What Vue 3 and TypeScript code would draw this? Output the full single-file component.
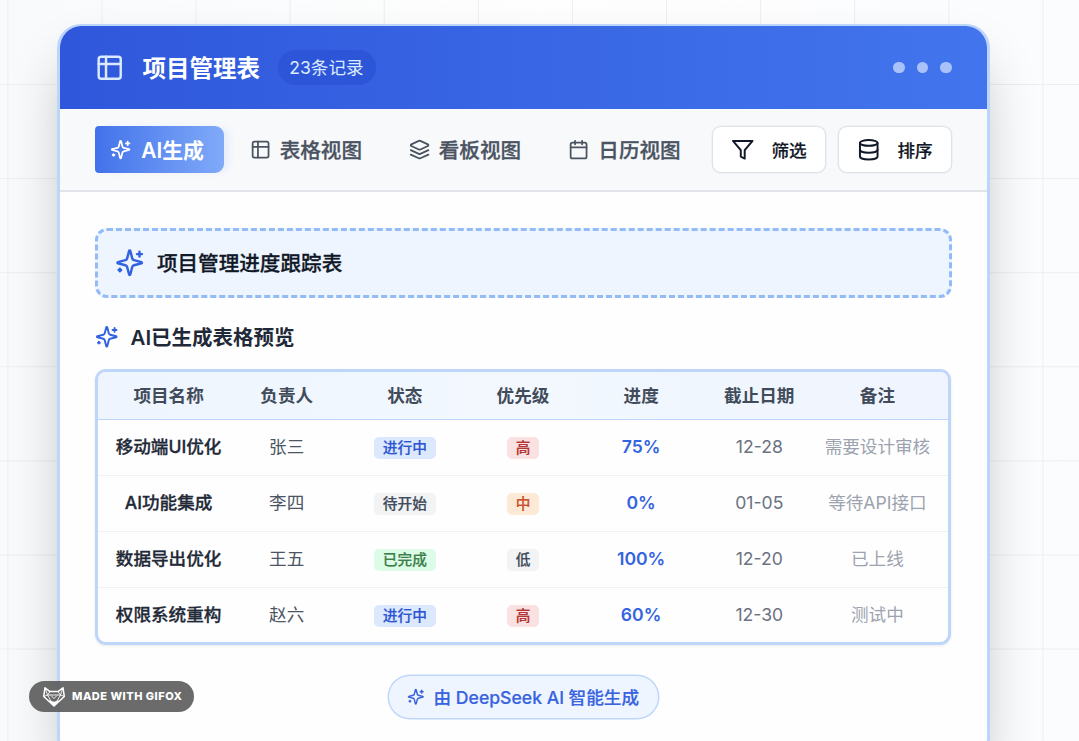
<script setup lang="ts">
import { h, type FunctionalComponent } from 'vue'

type IconName = 'table' | 'sparkles' | 'layers' | 'calendar' | 'filter' | 'database'

const paths: Record<IconName, string[]> = {
  table: ['M5 3h14a2 2 0 0 1 2 2v14a2 2 0 0 1-2 2H5a2 2 0 0 1-2-2V5a2 2 0 0 1 2-2z', 'M9 3v18', 'M3 9h18'],
  sparkles: [
    'M9.937 15.5A2 2 0 0 0 8.5 14.063l-6.135-1.582a.5.5 0 0 1 0-.962L8.5 9.936A2 2 0 0 0 9.937 8.5l1.582-6.135a.5.5 0 0 1 .963 0L14.063 8.5A2 2 0 0 0 15.5 9.937l6.135 1.581a.5.5 0 0 1 0 .964L15.5 14.063a2 2 0 0 0-1.437 1.437l-1.582 6.135a.5.5 0 0 1-.963 0z',
    'M20 3v4', 'M22 5h-4', 'M4 17v2', 'M5 18H3',
  ],
  layers: [
    'm12.83 2.18a2 2 0 0 0-1.66 0L2.6 6.08a1 1 0 0 0 0 1.83l8.58 3.91a2 2 0 0 0 1.66 0l8.58-3.9a1 1 0 0 0 0-1.83Z',
    'm22 17.65-9.17 4.16a2 2 0 0 1-1.66 0L2 17.65', 'm22 12.65-9.17 4.16a2 2 0 0 1-1.66 0L2 12.65',
  ],
  calendar: ['M8 2v4', 'M16 2v4', 'M5 4h14a2 2 0 0 1 2 2v14a2 2 0 0 1-2 2H5a2 2 0 0 1-2-2V6a2 2 0 0 1 2-2z', 'M3 9.600h18'],
  filter: ['M22 3H2l8 9.46V19l4 2v-8.54z'],
  database: ['M3 5a9 3 0 1 0 18 0a9 3 0 1 0-18 0', 'M3 5v14a9 3 0 0 0 18 0V5', 'M3 12a9 3 0 0 0 18 0'],
}

const Icon: FunctionalComponent<{ name: IconName }> = (props) =>
  h(
    'svg',
    { viewBox: '0 0 24 24', fill: 'none', stroke: 'currentColor', 'stroke-width': 2, 'stroke-linecap': 'round', 'stroke-linejoin': 'round' },
    paths[props.name].map((d) => h('path', { d })),
  )
Icon.props = ['name']

interface Row {
  name: string
  owner: string
  status: string
  statusTone: string
  priority: string
  priorityTone: string
  progress: string
  due: string
  note: string
}

const columns = ['项目名称', '负责人', '状态', '优先级', '进度', '截止日期', '备注']
const rows: Row[] = [
  { name: '移动端UI优化', owner: '张三', status: '进行中', statusTone: 'blue', priority: '高', priorityTone: 'red', progress: '75%', due: '12-28', note: '需要设计审核' },
  { name: 'AI功能集成', owner: '李四', status: '待开始', statusTone: 'gray', priority: '中', priorityTone: 'orange', progress: '0%', due: '01-05', note: '等待API接口' },
  { name: '数据导出优化', owner: '王五', status: '已完成', statusTone: 'green', priority: '低', priorityTone: 'gray', progress: '100%', due: '12-20', note: '已上线' },
  { name: '权限系统重构', owner: '赵六', status: '进行中', statusTone: 'blue', priority: '高', priorityTone: 'red', progress: '60%', due: '12-30', note: '测试中' },
]
</script>

<template>
  <main class="page">
    <section class="card">
      <header class="head">
        <Icon name="table" class="head-icon" />
        <h1>项目管理表</h1>
        <span class="count">23条记录</span>
        <div class="dots"><i /><i /><i /></div>
      </header>

      <nav class="toolbar">
        <button class="tab active"><Icon name="sparkles" /><span>AI生成</span></button>
        <button class="tab t-table"><Icon name="table" /><span>表格视图</span></button>
        <button class="tab t-board"><Icon name="layers" /><span>看板视图</span></button>
        <button class="tab t-cal"><Icon name="calendar" /><span>日历视图</span></button>
        <div class="tools">
          <button class="tool"><Icon name="filter" /><span>筛选</span></button>
          <button class="tool"><Icon name="database" /><span>排序</span></button>
        </div>
      </nav>

      <div class="body">
        <div class="prompt"><Icon name="sparkles" /><span>项目管理进度跟踪表</span></div>
        <h2><Icon name="sparkles" /><span>AI已生成表格预览</span></h2>

        <div class="table">
          <div class="row thead">
            <span v-for="c in columns" :key="c">{{ c }}</span>
          </div>
          <div v-for="r in rows" :key="r.name" class="row">
            <span class="name">{{ r.name }}</span>
            <span class="owner">{{ r.owner }}</span>
            <span class="cell-tag"><b class="tag" :class="r.statusTone">{{ r.status }}</b></span>
            <span class="cell-tag"><b class="tag" :class="r.priorityTone">{{ r.priority }}</b></span>
            <span class="progress">{{ r.progress }}</span>
            <span class="due">{{ r.due }}</span>
            <span class="note">{{ r.note }}</span>
          </div>
        </div>

        <div class="credit"><Icon name="sparkles" /><span>由 DeepSeek AI 智能生成</span></div>
      </div>
    </section>

    <div class="gifox">
      <svg viewBox="0 0 22 20" fill="none" stroke="#fff" stroke-width="0.900" stroke-linejoin="round">
        <path d="M2 .8 7 4.600h8L20 .8l1.300 8.700L11 19 .7 9.500z" stroke-width="1.500" />
        <path d="M2 .8 4.500 8 7 4.600M20 .8 17.500 8 15 4.600M.7 9.500 4.500 8h13l3.800 1.500M4.500 8 8.500 15M17.500 8l-4 7M8 8.500l3 3 3-3" />
        <path d="m6.500 13.800 4.500 1.500 4.500-1.500L11 19z" fill="#fff" />
      </svg>
      <span>MADE WITH GIFOX</span>
    </div>
  </main>
</template>

<style>
body {
  margin: 0;
  overflow: hidden;
}
</style>

<style scoped>
* {
  box-sizing: border-box;
}
.page {
  position: relative;
  width: 1079px;
  height: 741px;
  overflow: hidden;
  padding: 24px 0 0 57px;
  font-family: Inter, "Noto Sans CJK SC", sans-serif;
  background:
    linear-gradient(90deg, #eceef1 1px, transparent 1px) 7.400px 0 / 94.1px 94.1px,
    linear-gradient(#eceef1 1px, transparent 1px) 0 84px / 94.1px 94.1px,
    linear-gradient(90deg, #f8fafc, #fefefe 50%, #fbfcfe);
}
.card {
  width: 933px;
  height: 738px;
  border: 3px solid #bcd5fb;
  border-top-width: 2px;
  border-radius: 24px;
  background: #fefefe;
  overflow: hidden;
  box-shadow: 0 29px 59px -14px rgba(0, 0, 0, 0.31);
}
.head {
  height: 83px;
  display: flex;
  align-items: center;
  padding: 0 35px;
  background: linear-gradient(90deg, #2f57db, #4275ed);
  color: #fff;
}
.head-icon {
  width: 29.400px;
  height: 29.400px;
  color: #dbeafe;
}
h1 {
  margin: 2px 0 0 18px;
  font-size: 23.500px;
  line-height: 32px;
  font-weight: 700;
}
.count {
  margin-left: 18px;
  width: 98px;
  height: 35px;
  padding-right: 1px;
  border-radius: 18px;
  background: #2d55d8;
  color: #dbeafe;
  font-size: 17.600px;
  line-height: 36px;
  text-align: center;
}
.dots {
  margin-left: auto;
  display: flex;
  gap: 11.800px;
}
.dots i {
  width: 11.800px;
  height: 11.800px;
  border-radius: 50%;
  background: #a9c3fa;
}
button {
  border: 0;
  background: none;
  padding: 0;
  font: inherit;
}
.toolbar {
  height: 83px;
  display: flex;
  align-items: center;
  padding: 0 35px;
  background: #f8f9fb;
  border-bottom: 2px solid #e0e4e9;
}
.tab {
  height: 47px;
  display: flex;
  align-items: center;
  gap: 9px;
  font-size: 20.600px;
  font-weight: 500;
  color: #4a5361;
  white-space: nowrap;
  -webkit-text-stroke: 0.3px currentColor;
}
.tab span {
  padding-bottom: 2px;
}
.tab svg {
  width: 21.200px;
  height: 21.200px;
}
.active {
  width: 129px;
  padding-left: 15px;
  gap: 10px;
  border-radius: 4px 9px 9px 4px;
  background: linear-gradient(90deg, #4272ea, #80aaf9);
  color: #fff;
  font-size: 20.900px;
  font-weight: 600;
  -webkit-text-stroke: 0;
  box-shadow: 6px 0 9px -2px rgba(147, 190, 250, 0.2);
}
.t-table {
  margin-left: 25.500px;
}
.t-board {
  margin-left: 46.500px;
}
.t-cal {
  margin-left: 47px;
}
.tools {
  margin-left: auto;
  display: flex;
  gap: 12px;
}
.tool {
  width: 114px;
  height: 47px;
  display: flex;
  align-items: center;
  padding-left: 18px;
  gap: 17px;
  border: 1.500px solid #dfe3e8;
  box-shadow: 0 0 0 0.500px #e6e9ee;
  border-radius: 9px;
  background: #fff;
  color: #111827;
  font-size: 17.600px;
  font-weight: 500;
  -webkit-text-stroke: 0.2px currentColor;
}
.tool svg {
  width: 23.500px;
  height: 23.500px;
}
.body {
  padding: 36px 36px 0 35px;
}
.prompt {
  width: 857px;
  height: 70px;
  display: flex;
  align-items: center;
  padding-left: 17px;
  gap: 12.500px;
  border: 3px dashed #93bbf8;
  border-radius: 12px;
  background: #eff5fe;
  color: #111827;
  font-size: 20.600px;
  font-weight: 500;
  -webkit-text-stroke: 0.3px currentColor;
}
.prompt span {
  padding-bottom: 2px;
}
h2 span {
  padding-bottom: 3px;
}
.prompt svg {
  width: 29.400px;
  height: 29.400px;
  color: #3262e2;
}
h2 {
  margin: 24px 0 17px;
  height: 30px;
  display: flex;
  align-items: center;
  gap: 12px;
  font-size: 20.500px;
  font-weight: 600;
  color: #1f2937;
}
h2 svg {
  width: 23.500px;
  height: 23.500px;
  color: #3262e2;
}
.table {
  width: 856px;
  height: 276px;
  border: 3px solid #bfd6fb;
  border-radius: 11px;
  overflow: hidden;
  background: #fefefe;
  box-shadow: 0 1px 3px rgba(0, 0, 0, 0.08);
}
.row {
  height: 56px;
  display: grid;
  grid-template-columns: repeat(7, minmax(0, 1fr));
  align-items: center;
  padding: 0 11.500px 1px;
  text-align: center;
  font-size: 17.600px;
  line-height: 24px;
  white-space: nowrap;
  border-bottom: 1px solid #eff1f4;
}
.row:last-child {
  padding-bottom: 2px;
  border-bottom: 0;
}
.thead {
  height: 48px;
  padding-bottom: 0;
  background: linear-gradient(90deg, #eff5fe, #f2f8fe 50%, #eff4fe);
  border-bottom: 1px solid #bfd6fb;
  color: #414b5a;
  font-weight: 600;
}
.name {
  color: #1f2937;
  font-weight: 500;
  -webkit-text-stroke: 0.3px currentColor;
}
.owner {
  color: #4b5563;
}
.progress {
  color: #3464e0;
  font-weight: 600;
}
.due {
  color: #6b7280;
}
.note {
  color: #9ca3af;
}
.cell-tag {
  display: flex;
  justify-content: center;
}
.tag {
  height: 22px;
  margin-top: 1px;
  padding: 0 9px;
  border-radius: 5px;
  font-size: 14.700px;
  line-height: 23px;
  font-weight: 500;
  -webkit-text-stroke: 0.2px currentColor;
}
.blue {
  background: #dbe8fd;
  color: #2e55d2;
}
.gray {
  background: #f1f3f5;
  color: #414b5a;
}
.green {
  background: #dcfce7;
  color: #3c8049;
}
.red {
  background: #fbe2e2;
  color: #b33430;
}
.orange {
  background: #fdead6;
  color: #cb5030;
}
.credit {
  width: 271px;
  height: 44px;
  margin: 30px 0 0 292.500px;
  display: flex;
  align-items: center;
  justify-content: center;
  gap: 9px;
  border: 1.500px solid #bfd6fb;
  box-shadow: 0 0 0 0.500px #bfd6fb;
  border-radius: 22px;
  background: #eff5fe;
  color: #3864df;
  font-size: 17.600px;
  font-weight: 500;
  white-space: nowrap;
  -webkit-text-stroke: 0.2px currentColor;
}
.credit span {
  padding-bottom: 2px;
}
.credit svg {
  width: 17.600px;
  height: 17.600px;
}
.gifox {
  position: absolute;
  left: 29px;
  top: 681px;
  width: 165px;
  height: 31px;
  display: flex;
  align-items: center;
  padding-left: 14px;
  gap: 7px;
  border-radius: 16px;
  background: rgba(86, 86, 86, 0.88);
  color: #fff;
  font-size: 11px;
  font-weight: 800;
  letter-spacing: 0.5px;
  white-space: nowrap;
}
.gifox span {
  padding-bottom: 2px;
}
.gifox svg {
  width: 22px;
  height: 20px;
}
</style>
